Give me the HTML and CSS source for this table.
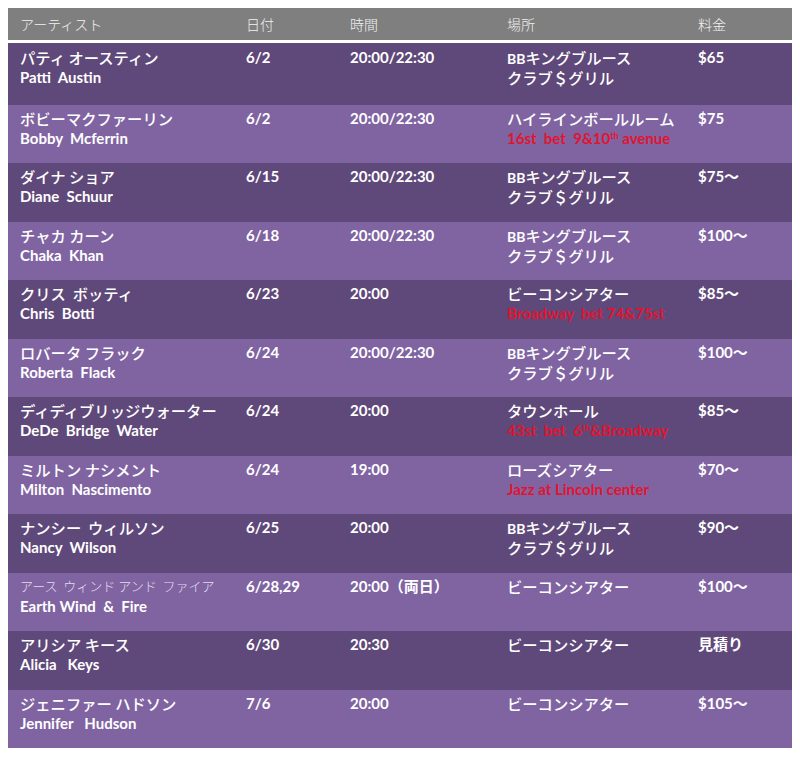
FILE: index.html
```html
<!DOCTYPE html>
<html lang="ja">
<head>
<meta charset="utf-8">
<title>スケジュール</title>
<link rel="stylesheet" href="styles.css">
</head>
<body>
<table class="sched">
<colgroup><col class="c1"><col class="c2"><col class="c3"><col class="c4"><col class="c5"></colgroup>
<thead>
<tr><th>アーティスト</th><th>日付</th><th>時間</th><th>場所</th><th>料金</th></tr>
</thead>
<tbody>
<tr>
<td><div class="jp">パティ オースティン</div><div class="en name">Patti  Austin</div></td>
<td class="en">6/2</td><td class="en">20:00/22:30</td>
<td><div class="jp"><span class="bb">BB</span>キングブルース</div><div class="jp">クラブ＄グリル</div></td>
<td class="en">$65</td>
</tr>
<tr>
<td><div class="jp">ボビーマクファーリン</div><div class="en name">Bobby  Mcferrin</div></td>
<td class="en">6/2</td><td class="en">20:00/22:30</td>
<td><div class="jp">ハイラインボールルーム</div><div class="en red">16st  bet  9&amp;10<sup>th</sup> avenue</div></td>
<td class="en">$75</td>
</tr>
<tr>
<td><div class="jp">ダイナ ショア</div><div class="en name">Diane  Schuur</div></td>
<td class="en">6/15</td><td class="en">20:00/22:30</td>
<td><div class="jp"><span class="bb">BB</span>キングブルース</div><div class="jp">クラブ＄グリル</div></td>
<td class="en">$75〜</td>
</tr>
<tr>
<td><div class="jp">チャカ カーン</div><div class="en name">Chaka  Khan</div></td>
<td class="en">6/18</td><td class="en">20:00/22:30</td>
<td><div class="jp"><span class="bb">BB</span>キングブルース</div><div class="jp">クラブ＄グリル</div></td>
<td class="en">$100〜</td>
</tr>
<tr>
<td><div class="jp">クリス  ボッティ</div><div class="en name">Chris  Botti</div></td>
<td class="en">6/23</td><td class="en">20:00</td>
<td><div class="jp">ビーコンシアター</div><div class="en red">Broadway  bet 74&amp;75st</div></td>
<td class="en">$85〜</td>
</tr>
<tr>
<td><div class="jp">ロバータ フラック</div><div class="en name">Roberta  Flack</div></td>
<td class="en">6/24</td><td class="en">20:00/22:30</td>
<td><div class="jp"><span class="bb">BB</span>キングブルース</div><div class="jp">クラブ＄グリル</div></td>
<td class="en">$100〜</td>
</tr>
<tr>
<td><div class="jp">ディディブリッジウォーター</div><div class="en name">DeDe  Bridge  Water</div></td>
<td class="en">6/24</td><td class="en">20:00</td>
<td><div class="jp">タウンホール</div><div class="en red">43st  bet  6<sup>th</sup>&amp;Broadway</div></td>
<td class="en">$85〜</td>
</tr>
<tr>
<td><div class="jp">ミルトン ナシメント</div><div class="en name">Milton  Nascimento</div></td>
<td class="en">6/24</td><td class="en">19:00</td>
<td><div class="jp">ローズシアター</div><div class="en red">Jazz at Lincoln center</div></td>
<td class="en">$70〜</td>
</tr>
<tr>
<td><div class="jp">ナンシー  ウィルソン</div><div class="en name">Nancy  Wilson</div></td>
<td class="en">6/25</td><td class="en">20:00</td>
<td><div class="jp"><span class="bb">BB</span>キングブルース</div><div class="jp">クラブ＄グリル</div></td>
<td class="en">$90〜</td>
</tr>
<tr>
<td><div class="jp thin">アース  ウィンド アンド  ファイア</div><div class="en name">Earth Wind  &amp;  Fire</div></td>
<td class="en">6/28,29</td><td class="en">20:00（両日）</td>
<td><div class="jp">ビーコンシアター</div></td>
<td class="en">$100〜</td>
</tr>
<tr>
<td><div class="jp">アリシア キース</div><div class="en name">Alicia   Keys</div></td>
<td class="en">6/30</td><td class="en">20:30</td>
<td><div class="jp">ビーコンシアター</div></td>
<td class="en">見積り</td>
</tr>
<tr>
<td><div class="jp">ジェニファー ハドソン</div><div class="en name">Jennifer   Hudson</div></td>
<td class="en">7/6</td><td class="en">20:00</td>
<td><div class="jp">ビーコンシアター</div></td>
<td class="en">$105〜</td>
</tr>
</tbody>
</table>
</body>
</html>
```

FILE: styles.css
```css
html, body {
  margin: 0;
  padding: 0;
  background: #ffffff;
}
body {
  padding: 8px;
  font-family: "Noto Sans CJK JP", sans-serif;
}
.sched {
  width: 784px;
  border-collapse: collapse;
  table-layout: fixed;
  color: #ffffff;
}
.c1 { width: 226px; }
.c2 { width: 104px; }
.c3 { width: 157px; }
.c4 { width: 191px; }
.c5 { width: 106px; }

.sched th {
  background: #7f7f7f;
  height: 32px;
  padding: 0 0 0 12px;
  text-align: left;
  font-family: "Noto Sans CJK JP", sans-serif;
  font-weight: 300;
  font-size: 14px;
  color: #f2f2f2;
  border-bottom: 3px solid #ffffff;
  vertical-align: middle;
}
.sched td {
  height: 58.5px;
  padding: 3px 0 0 12px;
  vertical-align: top;
  font-size: 15px;
  line-height: 20px;
  box-sizing: border-box;
}
.sched tbody tr:first-child td {
  height: 63px;
  padding-top: 4px;
}
.sched tbody tr:nth-child(odd) { background: #5f497a; }
.sched tbody tr:nth-child(even) { background: #8064a2; }

.jp {
  font-family: "Noto Sans CJK JP", sans-serif;
  font-weight: 500;
  font-size: 15.3px;
  line-height: 20px;
  height: 20px;
  white-space: pre;
}
.jp.thin {
  font-weight: 300;
  font-size: 13px;
  color: #e4dced;
}
.bb {
  font-family: "Lato", sans-serif;
  font-weight: 700;
  font-size: 14px;
  line-height: 1;
}
.en {
  font-family: "Lato", "Noto Sans CJK JP", sans-serif;
  font-weight: 700;
  font-size: 14px;
  white-space: pre;
}
.en.name {
  font-size: 15px;
  line-height: 21px;
}
.red {
  color: #e0142f;
  font-size: 15px;
}
.red sup {
  font-size: 9px;
  line-height: 0;
  vertical-align: 5px;
}
```
